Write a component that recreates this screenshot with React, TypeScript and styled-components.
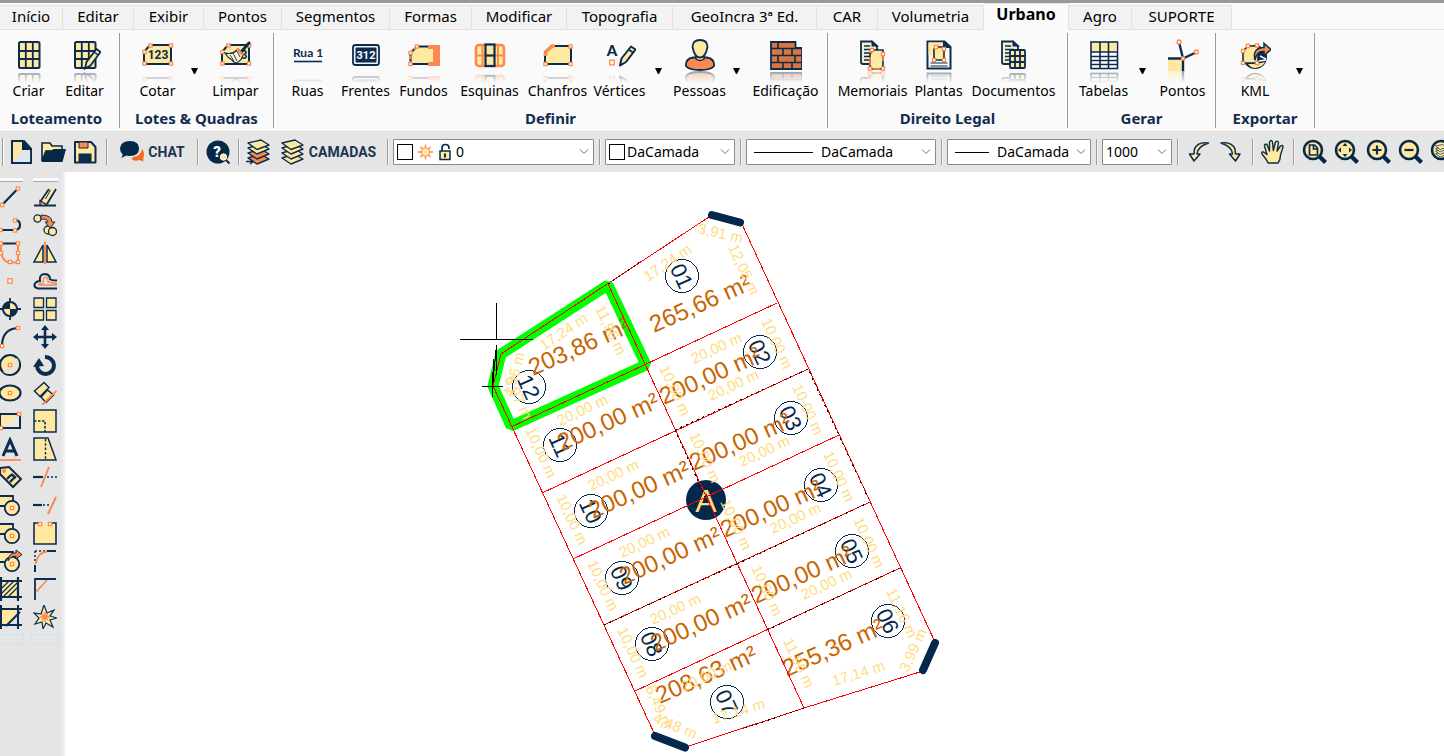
import React from "react";
import styled, { createGlobalStyle } from "styled-components";

const NAVY = "#0b2c4e";
const CREAM = "#ffe8a0";
const ORANGE = "#fb8a50";

const GlobalStyle = createGlobalStyle`
  * { box-sizing: border-box; }
  body {
    margin: 0;
    background: #ffffff;
    font-family: "Noto Sans", "Open Sans", sans-serif;
    color: #000000;
    overflow-x: hidden;
  }
  button, select, input { font: inherit; color: inherit; }
`;

const Page = styled.div`
  display: flex;
  flex-direction: column;
  min-height: 100vh;
  overflow: hidden;
`;

/* ---------- menu tabs ---------- */

const TabBar = styled.nav`
  display: flex;
  align-items: flex-end;
  height: 30px;
  background: #fafafa;
  border-top: 3px solid #999999;
  box-shadow: inset 0 -1px 0 #e2e2e2;
`;

const Tab = styled.button<{ $width: number; $active?: boolean }>`
  flex: none;
  min-width: ${(p) => p.$width}px;
  height: ${(p) => (p.$active ? 27 : 25)}px;
  padding: 0 0 ${(p) => (p.$active ? 4 : 2)}px;
  border: 1px solid #e2e2e2;
  border-left: 0;
  border-bottom-color: ${(p) => (p.$active ? "#fafafa" : "#e2e2e2")};
  background: ${(p) => (p.$active ? "#fafafa" : "#f2f2f2")};
  font-size: ${(p) => (p.$active ? 16 : 15)}px;
  line-height: 21px;
  font-weight: ${(p) => (p.$active ? 700 : 400)};
  white-space: nowrap;
`;

/* ---------- ribbon ---------- */

const Ribbon = styled.div`
  display: flex;
  height: 102px;
  padding-top: 3px;
  background: #fafafa;
  border-bottom: 1px solid #dedede;
`;

const Group = styled.section<{ $width: number }>`
  display: flex;
  flex: none;
  flex-direction: column;
  align-items: center;
  justify-content: space-between;
  min-width: ${(p) => p.$width}px;
  height: 95px;
  border-right: 1px solid #9a9a9a;

  &:first-child { padding-right: 6px; }
`;

const GroupButtons = styled.div`
  display: flex;
`;

const GroupTitle = styled.h2`
  margin: 0;
  padding-bottom: 1px;
  font-size: 15px;
  line-height: 18px;
  font-weight: 700;
  color: #142c50;
  white-space: nowrap;
`;

const RibbonButton = styled.button<{ $width: number }>`
  display: flex;
  flex-direction: column;
  align-items: center;
  width: ${(p) => p.$width}px;
  padding: 6px 0 0;
  border: 0;
  background: none;
  font-size: 14px;
  line-height: 16px;
  white-space: nowrap;
`;

const RibbonIcon = styled.svg`
  display: block;
  flex: none;
  width: 32px;
  height: 32px;
`;

const Reflection = styled.span`
  display: block;
  width: 32px;
  height: 12px;
  overflow: hidden;
  opacity: 0.45;
  mask-image: linear-gradient(#000, transparent);

  svg { transform: scaleY(-1); }
  text { display: none; }
`;

const DropButton = styled.button`
  display: flex;
  width: 20px;
  padding: 35px 0 0 4px;
  border: 0;
  background: none;
`;

/* ---------- tool bar ---------- */

const ToolBar = styled.div`
  display: flex;
  align-items: center;
  height: 40px;
  background: #e5e5e5;
  overflow: hidden;
`;

const Grip = styled.span`
  flex: none;
  width: 2px;
  height: 28px;
  margin: 0 1px 0 2px;
  background: #9c9c9c;
  border-right: 1px solid #fbfbfb;
`;

const Divider = styled.span`
  flex: none;
  width: 2px;
  height: 26px;
  margin: 0 4px 0 5px;
  border-left: 1px solid #9c9c9c;
  border-right: 1px solid #f6f6f6;
`;

const ToolButton = styled.button<{ $width?: number }>`
  display: flex;
  flex: none;
  align-items: center;
  justify-content: center;
  gap: 3px;
  width: ${(p) => p.$width ?? 32}px;
  height: 30px;
  padding: 0;
  border: 0;
  background: none;
  font-family: Roboto, sans-serif;
  font-size: 14px;
  font-weight: 700;
  color: #1b3550;
`;

const ToolIcon = styled.svg`
  display: block;
  flex: none;
  width: 26px;
  height: 26px;
`;

const Field = styled.label<{ $width: number; $gap?: number }>`
  display: flex;
  flex: none;
  align-items: center;
  gap: ${(p) => p.$gap ?? 4}px;
  width: ${(p) => p.$width}px;
  height: 26px;
  padding: 0 4px 0 3px;
  border: 1px solid #8a8a8a;
  border-radius: 1px;
  background: #ffffff;
  font-size: 14px;
`;

const Swatch = styled.span`
  flex: none;
  width: 16px;
  height: 16px;
  border: 1px solid #000000;
  background: #ffffff;
`;

const LinePreview = styled.span<{ $width: number }>`
  flex: none;
  width: ${(p) => p.$width}px;
  height: 1px;
  margin: 0 4px;
  background: #000000;
`;

const Select = styled.select`
  flex: 1;
  min-width: 0;
  height: 24px;
  padding: 0;
  margin: 0;
  border: 0;
  outline: 0;
  appearance: none;
  background: transparent;
  line-height: 24px;
`;

/* ---------- side tools and canvas ---------- */

const Workspace = styled.div`
  display: flex;
  flex: 1;
`;

const SidePanel = styled.aside`
  display: flex;
  flex: none;
  gap: 4px;
  width: 65px;
  padding: 6px 4px 0 0;
  background: #e5e5e5;
  border-right: 1px solid #f2f2f2;
  box-shadow: inset -2px 0 0 #ececec;
`;

const SideColumn = styled.div<{ $clipped?: boolean }>`
  display: flex;
  flex-direction: column;
  align-items: center;
  width: ${(p) => (p.$clipped ? 26 : 30)}px;
  padding-right: ${(p) => (p.$clipped ? 6 : 0)}px;

  &::before {
    content: "";
    width: 25px;
    height: 3px;
    margin-bottom: 2px;
    background: #fbfbfb;
    border-bottom: 1px solid #a8a8a8;
  }
`;

const SideButton = styled.button`
  display: flex;
  flex: none;
  align-items: center;
  justify-content: center;
  width: 28px;
  height: 28px;
  padding: 0 0 2px;
  border: 0;
  background: none;
`;

const SideIcon = styled.svg`
  display: block;
  flex: none;
  width: 24px;
  height: 24px;
`;

const DropSlot = styled.span`
  width: 28px;
  height: 10px;
  margin-top: 2px;
  border: 1px solid #c8e2f8;
`;

const Canvas = styled.main`
  flex: 1;
  min-width: 0;
  overflow: hidden;
  background: #ffffff;
`;

const Drawing = styled.svg`
  display: block;
  font-family: "Liberation Sans", Arial, sans-serif;
`;

/* ---------- shared icon parts ---------- */

const Knob = ({ x, y, r = 1.6 }: { x: number; y: number; r?: number }) => (
  <rect x={x - r} y={y - r} width={r * 2} height={r * 2} fill="#fff3d0" stroke={ORANGE} strokeWidth="1.2" />
);

const Knobs = ({ at }: { at: [number, number][] }) => (
  <>
    {at.map(([x, y]) => (
      <Knob key={`${x}-${y}`} x={x} y={y} />
    ))}
  </>
);

const LotGrid = () => (
  <g fill={CREAM} stroke={NAVY} strokeWidth="2">
    <rect x="6" y="3" width="20.5" height="26" rx="1.5" />
    <path d="M12.8 3v26M19.8 3v26M6 12h20.5M6 20h20.5" strokeWidth="1.8" />
  </g>
);

const Page32 = () => (
  <g>
    <path d="M5 3.500h11l5 5v17.500h-14q-2 0-2-2z" fill="#f6efcf" stroke={NAVY} strokeWidth="1.8" />
    <path d="M15.500 2l7.500 6.500h-7.500z" fill={NAVY} />
    <path d="M8 8h6M8 11.500h9M8 15h9M8 18.500h7M8 22h7" stroke={NAVY} strokeWidth="1.3" />
  </g>
);

const tag = (
  <>
    <path d="M2 13l6-7h21v19H2z" fill={CREAM} stroke={NAVY} strokeWidth="2" />
    <Knobs at={[[2.5, 13], [8.5, 6.5], [29, 6.5], [29, 24.5], [2.5, 24.5]]} />
  </>
);

const ribbonArt: Record<string, React.ReactNode> = {
  criar: <LotGrid />,
  editar: (
    <>
      <LotGrid />
      <path d="M16 29.500l1.500-6.500L27.500 10l4 3-10 13.500z" fill={CREAM} stroke={NAVY} strokeWidth="1.8" />
      <path d="M25 13l4 3" stroke={NAVY} strokeWidth="1.5" />
    </>
  ),
  cotar: (
    <>
      {tag}
      <text x="16" y="20" textAnchor="middle" fontFamily="Roboto, sans-serif" fontWeight="700" fontSize="12" fill={NAVY}>123</text>
    </>
  ),
  limpar: (
    <>
      {tag}
      <text x="24" y="20" textAnchor="middle" fontFamily="Roboto, sans-serif" fontWeight="700" fontSize="12" fill={NAVY}>3</text>
      <path d="M29 4L22 12" stroke={NAVY} strokeWidth="3" strokeLinecap="round" />
      <path d="M5 14q8 2 13-4l5 5q-1 7-7 9-3-1-4-3-4-2-7-7z" fill="#fff2c8" stroke={NAVY} strokeWidth="1.2" />
      <path d="M10 16l4 6M13 14l4 8M17 12l3 6" stroke={NAVY} strokeWidth="0.9" />
      <path d="M17 10l6 6" stroke={ORANGE} strokeWidth="2.5" />
    </>
  ),
  ruas: (
    <>
      <text x="16" y="18" textAnchor="middle" fontFamily="Lato, sans-serif" fontWeight="700" fontSize="12" fill={NAVY}>Rua 1</text>
      <path d="M2 22.500h28" stroke={NAVY} strokeWidth="1.6" />
    </>
  ),
  frentes: (
    <>
      <rect x="3" y="6" width="26" height="20" rx="2.5" fill="#f0f2f5" stroke={NAVY} strokeWidth="1.8" />
      <rect x="5.5" y="8.5" width="21" height="15" rx="1" fill={NAVY} />
      <text x="16" y="20" textAnchor="middle" fontFamily="Roboto, sans-serif" fontWeight="700" fontSize="11" fill="#ffffff">312</text>
    </>
  ),
  fundos: (
    <>
      <path d="M2.500 25V14l6.500-6.500h12V25z" fill={CREAM} stroke={NAVY} strokeWidth="2" />
      <path d="M20 6h12v21H20v-4h5V10h-5z" fill={ORANGE} />
      <path d="M20 10h5v13h-5z" fill={CREAM} />
      <path d="M2.500 14l6.500-6.500M2.500 25V14" stroke={ORANGE} strokeWidth="1.5" strokeDasharray="3 2" />
      <Knobs at={[[2.5, 14], [9, 7.5], [2.5, 25]]} />
    </>
  ),
  esquinas: (
    <>
      <rect x="2" y="6" width="28" height="21" rx="3" fill={CREAM} stroke={ORANGE} strokeWidth="2.6" />
      <path d="M2 16.500h28M8.500 6v21M24 6v21" stroke={ORANGE} strokeWidth="2" />
      <rect x="11.5" y="5.5" width="9" height="21.5" fill={CREAM} stroke={NAVY} strokeWidth="2.2" />
      <path d="M11 16.500h10" stroke={NAVY} strokeWidth="2.2" />
    </>
  ),
  chanfros: (
    <>
      <path d="M3 25V14l7-7h19v18z" fill={CREAM} stroke={NAVY} strokeWidth="2" />
      <path d="M3.500 17v-4l6.500-6h3" fill="none" stroke={ORANGE} strokeWidth="3.6" />
      <Knobs at={[[28.5, 7.5], [28.5, 25], [3.5, 25]]} />
    </>
  ),
  vertices: (
    <>
      <text x="8" y="17" textAnchor="middle" fontFamily="Lato, sans-serif" fontWeight="900" fontSize="15" fill={NAVY}>A</text>
      <Knob x={8} y={23.5} r={2.4} />
      <path d="M16 26.500l1.500-7L27 7.500l4.500 3L22 23z" fill={CREAM} stroke={NAVY} strokeWidth="2" strokeLinejoin="round" />
      <path d="M24.500 10.500l4.500 3M16 26.500l3-2" stroke={NAVY} strokeWidth="1.8" />
    </>
  ),
  pessoas: (
    <>
      <path d="M2 27q-1-7 7-8.500h14Q31 20 30 27q-3 4-14 4T2 27z" fill={ORANGE} stroke={NAVY} strokeWidth="1.8" />
      <path d="M12 16v4q4 3 8 0v-4" fill={CREAM} stroke={NAVY} strokeWidth="1.5" />
      <path d="M16 1q7.500 0 7.500 7Q21.500 18.500 16 18.500T8.500 8Q8.500 1 16 1z" fill={CREAM} stroke={NAVY} strokeWidth="1.8" />
    </>
  ),
  edificacao: (
    <>
      <path d="M1 3h24.500v6H32v21H1z" fill="#d9763e" stroke={NAVY} strokeWidth="1.8" />
      <path d="M1 9.500h31M1 16.500h31M1 23.500h31M8 3v6.500M13 9.500v7M22 9.500v7M8 16.500v7M25 16.500v7M13 23.500V30M22 23.500V30" stroke={NAVY} strokeWidth="1.6" />
    </>
  ),
  memoriais: (
    <>
      <g transform="translate(-1 -1)"><Page32 /></g>
      <path d="M13 15l3-4h10v19H13z" fill={CREAM} stroke={NAVY} strokeWidth="1.6" />
      <path d="M13 14l4-3.500M26 14v8M13 18v8M16 30h7" stroke={ORANGE} strokeWidth="1.6" />
      <Knobs at={[[13, 29.5], [26, 29.5], [26, 15], [15, 11]]} />
    </>
  ),
  plantas: (
    <>
      <path d="M4.500 2.500h17l6 5.500v21.500h-23z" fill="#fafafa" stroke={NAVY} strokeWidth="2" />
      <path d="M5.500 3.500h16v13h-16z" fill={CREAM} />
      <path d="M20 1.500l8.500 7.500H20z" fill={NAVY} />
      <path d="M11 10l2-2h8v13H11z" fill={CREAM} stroke={NAVY} strokeWidth="1.6" />
      <Knobs at={[[11, 21], [21, 21], [21, 10], [13, 8]]} />
      <path d="M7.500 24h17M7.500 27h17" stroke={NAVY} strokeWidth="1.2" />
    </>
  ),
  documentos: (
    <>
      <g transform="translate(-1 -1)"><Page32 /></g>
      <g fill={CREAM} stroke={NAVY} strokeWidth="1.8">
        <rect x="12" y="11" width="15" height="18" rx="1" />
        <path d="M17 11v18M22 11v18M12 17h15M12 23h15" />
      </g>
    </>
  ),
  tabelas: (
    <>
      <rect x="3" y="3" width="26.5" height="26.5" fill="#ffffff" stroke={NAVY} strokeWidth="1.6" />
      <rect x="4" y="4" width="24.5" height="9" fill={CREAM} />
      <path d="M12 3v26M20.500 3v26M3 13h26.500" stroke={NAVY} strokeWidth="1.6" />
      <path d="M3 17.500h26.500M3 21.500h26.500M3 25.500h26.500" stroke={NAVY} strokeWidth="1.3" />
    </>
  ),
  pontos: (
    <>
      <path d="M1 20h15v12H1z" fill={CREAM} />
      <path d="M1 19.500h15V32M16 19.500L12 3M16 19.500l14-6.500" fill="none" stroke={NAVY} strokeWidth="2.4" />
      <g fill="#fff3d0" stroke={ORANGE} strokeWidth="1.3">
        <circle cx="12" cy="3" r="2" />
        <circle cx="29.500" cy="13" r="2" />
        <rect x="14.500" y="18" width="3" height="3" />
      </g>
    </>
  ),
  kml: (
    <>
      <circle cx="16" cy="18" r="12" fill={NAVY} />
      <path d="M16 29q8-1 10-6-7 2-17 2 3 4 7 4z" fill={CREAM} />
      <path d="M20 22l7-1M21 17l6 3" stroke="#ffffff" strokeWidth="1.5" />
      <path d="M4 24V12l5-5h10v17z" fill={CREAM} stroke={NAVY} strokeWidth="1.6" />
      <path d="M16 21q-3-12 9-12.500V4.500l7 6-7 6v-4q-7-1-9 8.500z" fill={ORANGE} stroke={NAVY} strokeWidth="1.5" />
      <Knobs at={[[4, 12], [9, 7], [18, 6.5], [4, 24], [18, 24]]} />
    </>
  ),
};

type Command = { label: string; art: string; width: number; menu?: boolean };

const ribbonGroups: { title: string; width: number; commands: Command[] }[] = [
  { title: "Loteamento", width: 120, commands: [
    { label: "Criar", art: "criar", width: 56 },
    { label: "Editar", art: "editar", width: 56 },
  ] },
  { title: "Lotes & Quadras", width: 154, commands: [
    { label: "Cotar", art: "cotar", width: 58, menu: true },
    { label: "Limpar", art: "limpar", width: 58 },
  ] },
  { title: "Definir", width: 554, commands: [
    { label: "Ruas", art: "ruas", width: 58 },
    { label: "Frentes", art: "frentes", width: 58 },
    { label: "Fundos", art: "fundos", width: 58 },
    { label: "Esquinas", art: "esquinas", width: 74 },
    { label: "Chanfros", art: "chanfros", width: 62 },
    { label: "Vértices", art: "vertices", width: 62, menu: true },
    { label: "Pessoas", art: "pessoas", width: 58, menu: true },
    { label: "Edificação", art: "edificacao", width: 74 },
  ] },
  { title: "Direito Legal", width: 240, commands: [
    { label: "Memoriais", art: "memoriais", width: 74 },
    { label: "Plantas", art: "plantas", width: 58 },
    { label: "Documentos", art: "documentos", width: 92 },
  ] },
  { title: "Gerar", width: 148, commands: [
    { label: "Tabelas", art: "tabelas", width: 62, menu: true },
    { label: "Pontos", art: "pontos", width: 56 },
  ] },
  { title: "Exportar", width: 99, commands: [
    { label: "KML", art: "kml", width: 74, menu: true },
  ] },
];

const tabs: [string, number][] = [
  ["Início", 63], ["Editar", 71], ["Exibir", 70], ["Pontos", 78], ["Segmentos", 108], ["Formas", 82],
  ["Modificar", 95], ["Topografia", 106], ["GeoIncra 3ª Ed.", 144], ["CAR", 61], ["Volumetria", 106],
  ["Urbano", 85], ["Agro", 63], ["SUPORTE", 100],
];

const Chevron = () => (
  <svg width="10" height="6" viewBox="0 0 10 6" aria-hidden="true">
    <path d="M1 0.500l4 4 4-4" fill="none" stroke="#707070" />
  </svg>
);

const Layers = ({ last }: { last: string }) => (
  <g stroke={NAVY} strokeWidth="1.4" strokeLinejoin="round">
    <path d="M2 19l12-4 9 5-12 5z" fill={last} />
    <path d="M2 14l13-4 8 5-12 5z" fill={last} />
    <path d="M2 9l13-4 8 5-12 5z" fill={CREAM} />
    <path d="M2 4l13-3 8 5-12 4.500z" fill={CREAM} />
  </g>
);

const Lens = ({ children }: { children: React.ReactNode }) => (
  <>
    <path d="M17.500 17.500l6 6" stroke="#06294a" strokeWidth="4.2" />
    <circle cx="11" cy="11" r="9" fill={CREAM} stroke="#06294a" strokeWidth="2.6" />
    {children}
  </>
);

const toolArt: Record<string, React.ReactNode> = {
  novo: (
    <>
      <path d="M4 2h12l7 7.500V24H4z" fill={CREAM} stroke={NAVY} strokeWidth="1.8" />
      <path d="M4 24L14 12h9v12z" fill="#dfe6ec" />
      <path d="M14 1l10 10H14z" fill="#06294a" />
      <path d="M4 2h11l8 8V24H4z" fill="none" stroke={NAVY} strokeWidth="1.8" />
    </>
  ),
  abrir: (
    <>
      <path d="M2 22V4h8l2 3h10v5H6z" fill={CREAM} stroke="#06294a" strokeWidth="1.6" />
      <path d="M5.500 11.500h6l2-1.500H26l-3.500 13H1.500z" fill="#06294a" />
    </>
  ),
  salvar: (
    <>
      <path d="M3 3h16l4.500 5v15.500H3z" fill={CREAM} stroke={NAVY} strokeWidth="2" strokeLinejoin="round" />
      <path d="M7 3h9v6H7z" fill={ORANGE} stroke={NAVY} strokeWidth="1" />
      <path d="M6.500 23v-8.500h13V23z" fill={NAVY} />
    </>
  ),
  chat: (
    <>
      <path d="M14 16q8-1 9-8 3 3 1.500 8.500-.5 2 0 4l-4-1.500q-5 2-8-1z" fill="#f06a28" transform="translate(0 2)" />
      <path d="M11 2q9 0 9 7.500T11 17q-2 0-3.500-.5L2 19q2-2 1.500-4Q1 13 1 9.500 1.500 2 11 2z" fill="#06294a" />
    </>
  ),
  ajuda: (
    <>
      <circle cx="13" cy="13" r="11.5" fill="#06294a" />
      <text x="12" y="18" textAnchor="middle" fontFamily="Roboto, sans-serif" fontWeight="900" fontSize="15" fill="#ffffff">?</text>
      <path d="M20.500 20.500l4 4" stroke={NAVY} strokeWidth="2" />
      <circle cx="18.5" cy="18" r="3.2" fill={CREAM} stroke="#ffffff" strokeWidth="1" />
    </>
  ),
  camada: (
    <>
      <Layers last={ORANGE} />
      <path d="M0 22.500h6M4 20l3 2.500L4 25" fill="none" stroke={NAVY} strokeWidth="1.6" />
    </>
  ),
  camadas: <Layers last={CREAM} />,
  desfazer: (
    <path d="M22.500 4q-11-1.500-14 6l-.5 5H3.500L8 22l6-7h-3q0-7 11.500-11z" fill={CREAM} stroke={NAVY} strokeWidth="1.5" strokeLinejoin="round" />
  ),
  refazer: (
    <path d="M3 4q11-1.500 14 6l.5 5H22l-4.500 7-6-7h3Q14.500 8 3 4z" fill={CREAM} stroke={NAVY} strokeWidth="1.5" strokeLinejoin="round" />
  ),
  mao: (
    <path d="M8 24q-1-3-6-9-1-2.500 1.500-2L7 15.500 4.500 7Q4.500 4.500 7 5.500L9.500 12 9.500 3q1.500-3 3 0l.8 8.500L15.500 3q2-2 3 .5L17 12l3.500-5q2.500-1.500 2.500 1L20.500 16q0 5-2.500 8z" fill={CREAM} stroke={NAVY} strokeWidth="1.4" strokeLinejoin="round" />
  ),
  zoomPagina: <Lens><path d="M7.500 6h5l3 3v7h-8z" fill={CREAM} stroke={NAVY} strokeWidth="1.7" /><path d="M11.500 6v4h4" fill="none" stroke={NAVY} strokeWidth="1.7" /></Lens>,
  zoomTudo: <Lens><path d="M11 4l2.500 3h-5zM11 18l2.500-3h-5zM4 11l3-2.500v5zM18 11l-3-2.500v5z" fill={NAVY} /></Lens>,
  mais: <Lens><path d="M11 6.500v9M6.500 11h9" stroke={NAVY} strokeWidth="2.2" /></Lens>,
  menos: <Lens><path d="M6.500 11h9" stroke={NAVY} strokeWidth="2.2" /></Lens>,
  zoomCamada: <Lens><g transform="translate(4.500 5) scale(0.52)"><Layers last={CREAM} /></g></Lens>,
};

const Tool = ({ art, label, width, text }: { art: string; label: string; width?: number; text?: string }) => (
  <ToolButton $width={width} aria-label={label} title={label}>
    <ToolIcon viewBox="0 0 26 26" fill="none">{toolArt[art]}</ToolIcon>
    {text}
  </ToolButton>
);

const K = NAVY;
const circleOverRect = (
  <>
    <path d="M0 3h15v10H0z" fill={CREAM} stroke={K} strokeWidth="1.8" />
    <circle cx="14" cy="15" r="7.2" fill={CREAM} stroke={K} strokeWidth="1.8" />
    <Knob x={14} y={15} />
  </>
);

const leftTools: [string, React.ReactNode][] = [
  ["Linha", <><path d="M4 20L20 3.500" stroke={K} strokeWidth="2.2" /><Knobs at={[[4, 20], [20, 3.5]]} /></>],
  ["Polilinha", <><path d="M0 17h16q6 0 6-5t-5-5" stroke={K} strokeWidth="2.2" fill="none" /><Knobs at={[[2.5, 17], [17, 17.5], [17, 7.5]]} /></>],
  ["Polígono", <><path d="M3 2.500h17" stroke={K} strokeWidth="2" /><path d="M3 2.500v9q2 10 9 10h8v-19" stroke={ORANGE} strokeWidth="2" fill="none" /><Knobs at={[[3, 2.5], [20, 2.5], [3, 12], [20, 12], [12, 21], [20, 21]]} /></>],
  ["Ponto", <Knob x={12} y={12} r={2.2} />],
  ["Marco", <><path d="M12 1v22M1 12h22" stroke={K} strokeWidth="1.8" /><circle cx="12" cy="12" r="7" fill={CREAM} stroke={K} strokeWidth="2" /><path d="M12 12V5a7 7 0 0 0-7 7zM12 12v7a7 7 0 0 0 7-7z" fill={K} /></>],
  ["Arco", <><path d="M4 21Q4 4 20 3" stroke={K} strokeWidth="2.2" fill="none" /><Knobs at={[[4, 21], [20, 3]]} /></>],
  ["Círculo", <><circle cx="12" cy="12" r="10" fill={CREAM} stroke={K} strokeWidth="2.2" /><path d="M5 19L19 5a10 10 0 0 1-14 14z" fill="#e8e4d0" /><Knob x={12} y={12} /></>],
  ["Elipse", <><ellipse cx="12" cy="12" rx="10.500" ry="7.5" fill={CREAM} stroke={K} strokeWidth="2.2" /><Knob x={12} y={12} /></>],
  ["Retângulo", <><path d="M2 5h20v14H2z" fill={CREAM} /><path d="M22 5v14H2z" fill="#ece9dc" /><path d="M2 5h20v14H2z" stroke={K} strokeWidth="2" fill="none" /><Knobs at={[[3, 19], [21, 5]]} /></>],
  ["Texto", <><path d="M5 19L12 3l7 16M7.500 14h9" stroke={K} strokeWidth="3" fill="none" /><path d="M1 23h22" stroke={ORANGE} strokeWidth="1.8" /></>],
  ["Etiqueta", <><path d="M2 3l9-1 12 12-8 8L2 9z" fill={CREAM} stroke={K} strokeWidth="2" /><circle cx="6" cy="6" r="2" fill={ORANGE} /><path d="M9 14l4-4M12 17l4-4M13 9l5 4" stroke={K} strokeWidth="2.4" /></>],
  ["Círculo 2 pontos", circleOverRect],
  ["Círculo 3 pontos", circleOverRect],
  ["Substituir", <>{circleOverRect}<path d="M10 12q1-9 8-8V1l6 4.500-6 4.500V7.500q-5-1-8 4.500z" fill={ORANGE} stroke={K} /></>],
  ["Hachura", <><path d="M3 4h17v16H3z" fill={CREAM} /><path d="M4 11l7-7M4 16L16 4M5 20L20 5M10 20l10-10" stroke={K} strokeWidth="1.3" /><path d="M3 0v24M20 0v24M0 4h24M0 20h24" stroke={K} strokeWidth="2.2" /></>],
  ["Contorno", <><path d="M3 4h17v16H3z" fill={CREAM} /><path d="M20 8L9 20h11z" fill="#dfe3e8" /><path d="M3 0v24M20 0v24M0 4h24M0 20h24M8 21L22 7" stroke={K} strokeWidth="2" /></>],
];

const rightTools: [string, React.ReactNode][] = [
  ["Apagar", <><path d="M1 20.500h22" stroke={K} strokeWidth="2" /><path d="M7 19l9-15h7l-9 15z" fill={CREAM} /><path d="M7 17l9-13M14 19l9-15" stroke={K} strokeWidth="1.8" /><path d="M7 15.500l6.500 4q-4 2.500-6.500 0z" fill={ORANGE} stroke={K} strokeWidth="1.2" /><path d="M12.500 14l5-9" stroke={K} /></>],
  ["Copiar", <><g fill={CREAM} stroke={K} strokeWidth="1.3"><circle cx="4.500" cy="5.500" r="3.600" /><circle cx="15" cy="17" r="4" /><circle cx="19.500" cy="18.500" r="4" /></g><path d="M8 2q11 0 11 7h3l-5 6-5-6h3q0-3-7-3z" fill={ORANGE} stroke={K} /></>],
  ["Espelhar", <><path d="M10 4v17H1zM14 4v17h9z" fill={CREAM} stroke={K} strokeWidth="1.5" /><path d="M12 1v22" stroke={ORANGE} strokeWidth="2" /></>],
  ["Deslocar", <><path d="M24 19.500H5q-4-1-3.500-4Q3 12 7 12q-1-7 5-7 5 .5 5 5 1 1.500 7 1.500" stroke={K} strokeWidth="2" fill="none" /><path d="M24 16H6q-1-2 2-1.500l2.500-1q-1-5.500 2.500-5 2.500.5 2 4.500l9 1.500" stroke={ORANGE} strokeWidth="1.3" fill="none" /></>],
  ["Matriz", <path d="M1 1h9.500v9.500H1zM13.500 1H23v9.500h-9.500zM1 13.500h9.500V23H1zM13.500 13.500H23V23h-9.500z" fill={CREAM} stroke={K} strokeWidth="1.3" />],
  ["Mover", <><path d="M12 2v20M2 12h20" stroke={K} strokeWidth="2.6" /><path d="M12 0l4 5H8zM12 24l4-5H8zM0 12l5-4v8zM24 12l-5-4v8z" fill={K} /></>],
  ["Girar", <><path d="M12 4a8.500 8.500 0 1 1-8 9" stroke={K} strokeWidth="4" fill="none" /><path d="M0 14l6-9 5 8z" fill={K} /></>],
  ["Alinhar", <><path d="M1.500 10L11 1.500l5 5-9 9zM8 16l6.500-7 6 5-7.500 7.500z" fill={CREAM} stroke={K} strokeWidth="1.5" /><path d="M9 24L23.500 10" stroke={ORANGE} strokeWidth="1.8" /></>],
  ["Escala", <><path d="M1 1h22v22H1z" fill={CREAM} stroke={K} strokeWidth="1.5" /><path d="M1 12h11v11" stroke={K} strokeWidth="1.6" strokeDasharray="2.5 1.5" fill="none" /></>],
  ["Esticar", <><path d="M1 1h14l8 22H1z" fill={CREAM} stroke={K} strokeWidth="1.5" /><path d="M12.500 2v20" stroke={K} strokeDasharray="2.5 1.8" strokeWidth="1.5" /></>],
  ["Aparar", <><path d="M0 12h10" stroke={K} strokeWidth="2.2" /><path d="M14 12h10" stroke={K} strokeWidth="1.5" strokeDasharray="2 2" /><path d="M8 22L16 2" stroke={ORANGE} strokeWidth="2" /></>],
  ["Estender", <><path d="M0 12h9" stroke={K} strokeWidth="2.2" /><path d="M10 12h8" stroke={K} strokeWidth="1.5" strokeDasharray="2 2" /><path d="M15 21l8-17" stroke={ORANGE} strokeWidth="2" /></>],
  ["Quebrar", <><path d="M1 2h22v21H1z" fill={CREAM} stroke={K} strokeWidth="1.6" /><path d="M8 2h8" stroke="#e5e5e5" strokeWidth="2" /><Knobs at={[[7, 3], [17, 3]]} /></>],
  ["Concordar", <><path d="M2 2h10M2 2v12" stroke={K} strokeDasharray="2 2" strokeWidth="1.5" /><path d="M2 16v7M14 2h9" stroke={K} strokeWidth="2" /><path d="M2.500 15Q5 3 14 2.500" stroke={ORANGE} strokeWidth="1.8" fill="none" /></>],
  ["Chanfrar", <><path d="M2 23V2h21" stroke={K} strokeWidth="1.8" fill="none" /><path d="M3 15L14 3" stroke={ORANGE} strokeWidth="1.8" /></>],
  ["Explodir", <><path d="M11 0l3 8 7-3-4 6 7 2-7 2 3 7-7-4-3 6-1-7-7 2 4-6-5-5 7 1z" fill={CREAM} stroke={K} strokeWidth="1.2" /><path d="M12 7v10M7 12h10M9 9l6 6M15 9l-6 6" stroke={ORANGE} strokeWidth="1.5" /></>],
];

const SideTools = ({ tools, clipped }: { tools: [string, React.ReactNode][]; clipped?: boolean }) => (
  <SideColumn $clipped={clipped}>
    {tools.map(([label, art]) => (
      <SideButton key={label} aria-label={label} title={label}>
        <SideIcon viewBox="0 0 24 24" fill="none">{art}</SideIcon>
      </SideButton>
    ))}
    <DropSlot />
  </SideColumn>
);

/* ---------- subdivision plan ---------- */

type Label = [x: number, y: number, angle: number, text: string];

const areas: Label[] = [
  [654, 333, -24, "265,66 m²"], [664, 405, -24, "200,00 m²"], [694, 471, -24, "200,00 m²"],
  [725, 538, -24, "200,00 m²"], [756, 604, -24, "200,00 m²"], [787, 677, -24, "255,36 m²"],
  [660, 704, -24, "208,63 m²"], [655, 652, -24, "200,00 m²"], [624, 585, -24, "200,00 m²"],
  [593, 519, -24, "200,00 m²"], [562, 451, -24, "200,00 m²"], [533, 376, -24, "203,86 m²"],
];

const dimensions: Label[] = [
  [560, 426, -25, "20,00 m"], [591, 491, -25, "20,00 m"], [622, 558, -25, "20,00 m"],
  [653, 625, -25, "20,00 m"], [684, 692, -25, "20,00 m"],
  [694, 364, -25, "20,00 m"], [711, 401, -25, "20,00 m"], [742, 467, -25, "20,00 m"],
  [773, 534, -25, "20,00 m"], [804, 600, -25, "20,00 m"],
  [714, 724, -17, "17,14 m"], [834, 686, -17, "17,14 m"],
  [648, 282, -34, "17,24 m"], [544, 351, -34, "17,24 m"],
  [525, 430, 65, "10,00 m"], [556, 497, 65, "10,00 m"], [587, 563, 65, "10,00 m"],
  [617, 630, 65, "10,00 m"], [645, 688, 65, "6,49 m"], [652, 722, 22, "4,48 m"],
  [659, 368, 65, "10,00 m"], [689, 435, 65, "10,00 m"], [720, 502, 65, "10,00 m"],
  [751, 568, 65, "10,00 m"], [783, 641, 65, "11,96 m"], [595, 308, 65, "11,96 m"],
  [728, 247, 65, "12,05 m"], [761, 321, 65, "10,00 m"], [792, 387, 65, "10,00 m"],
  [823, 454, 65, "10,00 m"], [853, 520, 65, "10,00 m"], [886, 591, 65, "11,16 m"],
  [697, 233, 13, "3,91 m"], [908, 673, -65, "3,99 m"],
  [513, 398, -75, "4,36 m"], [504, 379, 65, "5,97 m"],
];

const lots: [number, number, string][] = [
  [682, 276, "01"], [760, 352, "02"], [791, 418, "03"], [821, 485, "04"], [852, 551, "05"], [888, 621, "06"],
  [727, 702, "07"], [652, 644, "08"], [622, 578, "09"], [591, 511, "10"], [560, 445, "11"], [529, 387, "12"],
];

const boundaries =
  "M712 215L501 354L493 386L655 735M686 747L804 708L923 671M935 642L741 222" +
  "M608 284L804 708M511 427L777 303M542 493L808 369M573 559L839 435M604 625L870 502M635 691L900 568";

const overlaps = "M608 284L640 262M675 430L706 499M675 430L808 369L870 502M737 564L870 502M767 630L900 568M745 728L804 708M604 625L737 564";

const Plan = () => (
  <Drawing width="1380" height="584" viewBox="65 172 1380 584" role="img" aria-label="Planta da quadra A">
    <path d="M608 285L646 365L511 426L493 386L501 354Z" fill="none" stroke="#00ff00" strokeWidth="11" strokeLinejoin="bevel" />
    <g fill="none" stroke="#04284c">
      {lots.map(([x, y, n]) => (
        <circle key={n} cx={x} cy={y} r="16.5" shapeRendering="crispEdges" />
      ))}
    </g>
    <g fill="#04284c" fontFamily="'Liberation Sans Narrow', 'Liberation Sans', sans-serif" fontSize="22" textAnchor="middle">
      {lots.map(([x, y, n]) => (
        <text key={n} x={x} y={y} dy="8" transform={`rotate(65 ${x} ${y})`}>{n}</text>
      ))}
    </g>
    <g fill="#c86400" fontSize="24">
      {areas.map(([x, y, a, t]) => (
        <text key={`${x}-${y}`} transform={`translate(${x} ${y}) rotate(${a})`}>{t}</text>
      ))}
    </g>
    <circle cx="706" cy="500" r="20" fill="#04284c" />
    <text x="706" y="512" textAnchor="middle" fontSize="32" fill="#ffdc78">A</text>
    <g fill="#ffdc82" fontSize="15">
      {dimensions.map(([x, y, a, t]) => (
        <text key={`${x}-${y}`} transform={`translate(${x} ${y}) rotate(${a})`}>{t}</text>
      ))}
    </g>
    <g fill="none" shapeRendering="crispEdges">
      <path d={boundaries} stroke="#ff0000" />
      <path d={overlaps} stroke="#000000" strokeDasharray="2 4" />
    </g>
    <path d="M712 215L740 222.500M655 736L685 747.500M935 643L923 670" stroke="#04284c" strokeWidth="8" strokeLinecap="round" />
    <path d="M496.500 303v37M460 339.500h73M482 386.500h21M492.500 397v-10l4-42v30M492.500 385l1-26" stroke="#000000" fill="none" shapeRendering="crispEdges" />
  </Drawing>
);

export default function App() {
  return (
    <Page>
      <GlobalStyle />
      <TabBar>
        {tabs.map(([name, width]) => (
          <Tab key={name} $width={width} $active={name === "Urbano"}>{name}</Tab>
        ))}
      </TabBar>

      <Ribbon>
        {ribbonGroups.map((group) => (
          <Group key={group.title} $width={group.width}>
            <GroupButtons>
              {group.commands.map((c) => (
                <React.Fragment key={c.label}>
                  <RibbonButton $width={c.width}>
                    <RibbonIcon viewBox="0 0 32 32" fill="none">{ribbonArt[c.art]}</RibbonIcon>
                    <Reflection aria-hidden="true">
                      <RibbonIcon viewBox="0 0 32 32" fill="none">{ribbonArt[c.art]}</RibbonIcon>
                    </Reflection>
                    {c.label}
                  </RibbonButton>
                  {c.menu && (
                    <DropButton aria-label={`Opções de ${c.label}`}>
                      <svg width="7" height="6" viewBox="0 0 7 6"><path d="M0 0h7L4 6H3z" fill="#000000" /></svg>
                    </DropButton>
                  )}
                </React.Fragment>
              ))}
            </GroupButtons>
            <GroupTitle>{group.title}</GroupTitle>
          </Group>
        ))}
      </Ribbon>

      <ToolBar>
        <Grip />
        <Tool art="novo" label="Novo" />
        <Tool art="abrir" label="Abrir" />
        <Tool art="salvar" label="Salvar" />
        <Divider />
        <Tool art="chat" label="Chat" width={80} text="CHAT" />
        <Divider />
        <Tool art="ajuda" label="Ajuda" width={30} />
        <Divider />
        <Tool art="camada" label="Camada atual" width={30} />
        <Tool art="camadas" label="Camadas" width={108} text="CAMADAS" />
        <Divider />
        <Field $width={201}>
          <Swatch />
          <svg width="17" height="18" viewBox="0 0 18 18" aria-hidden="true">
            <path d="M9 1v16M1 9h16M3.500 3.500l11 11M14.500 3.500l-11 11" stroke={ORANGE} strokeWidth="1.5" />
            <circle cx="9" cy="9" r="4.5" fill={CREAM} stroke={ORANGE} />
          </svg>
          <svg width="14" height="18" viewBox="0 0 14 18" aria-hidden="true">
            <path d="M4 9V5q0-3.500 3.500-3.500T11 5v1" fill="none" stroke={NAVY} strokeWidth="1.7" />
            <path d="M2 8h10v8.500H2z" fill={CREAM} stroke={NAVY} strokeWidth="1.5" />
            <path d="M7 10.500v4" stroke={NAVY} strokeWidth="2" />
          </svg>
          <Select aria-label="Camada"><option>0</option></Select>
          <Chevron />
        </Field>
        <Divider />
        <Field $width={130} $gap={2}>
          <Swatch />
          <Select aria-label="Cor"><option>DaCamada</option></Select>
          <Chevron />
        </Field>
        <Divider />
        <Field $width={190}>
          <LinePreview $width={59} />
          <Select aria-label="Tipo de linha"><option>DaCamada</option></Select>
          <Chevron />
        </Field>
        <Divider />
        <Field $width={144}>
          <LinePreview $width={34} />
          <Select aria-label="Espessura"><option>DaCamada</option></Select>
          <Chevron />
        </Field>
        <Divider />
        <Field $width={70}>
          <Select aria-label="Escala"><option>1000</option></Select>
          <Chevron />
        </Field>
        <Divider />
        <Tool art="desfazer" label="Desfazer" />
        <Tool art="refazer" label="Refazer" />
        <Divider />
        <Tool art="mao" label="Mover vista" width={30} />
        <Divider />
        <Tool art="zoomPagina" label="Zoom página" />
        <Tool art="zoomTudo" label="Zoom extensão" />
        <Tool art="mais" label="Aproximar" />
        <Tool art="menos" label="Afastar" />
        <Tool art="zoomCamada" label="Zoom camada" />
      </ToolBar>

      <Workspace>
        <SidePanel>
          <SideTools tools={leftTools} clipped />
          <SideTools tools={rightTools} />
        </SidePanel>
        <Canvas>
          <Plan />
        </Canvas>
      </Workspace>
    </Page>
  );
}
